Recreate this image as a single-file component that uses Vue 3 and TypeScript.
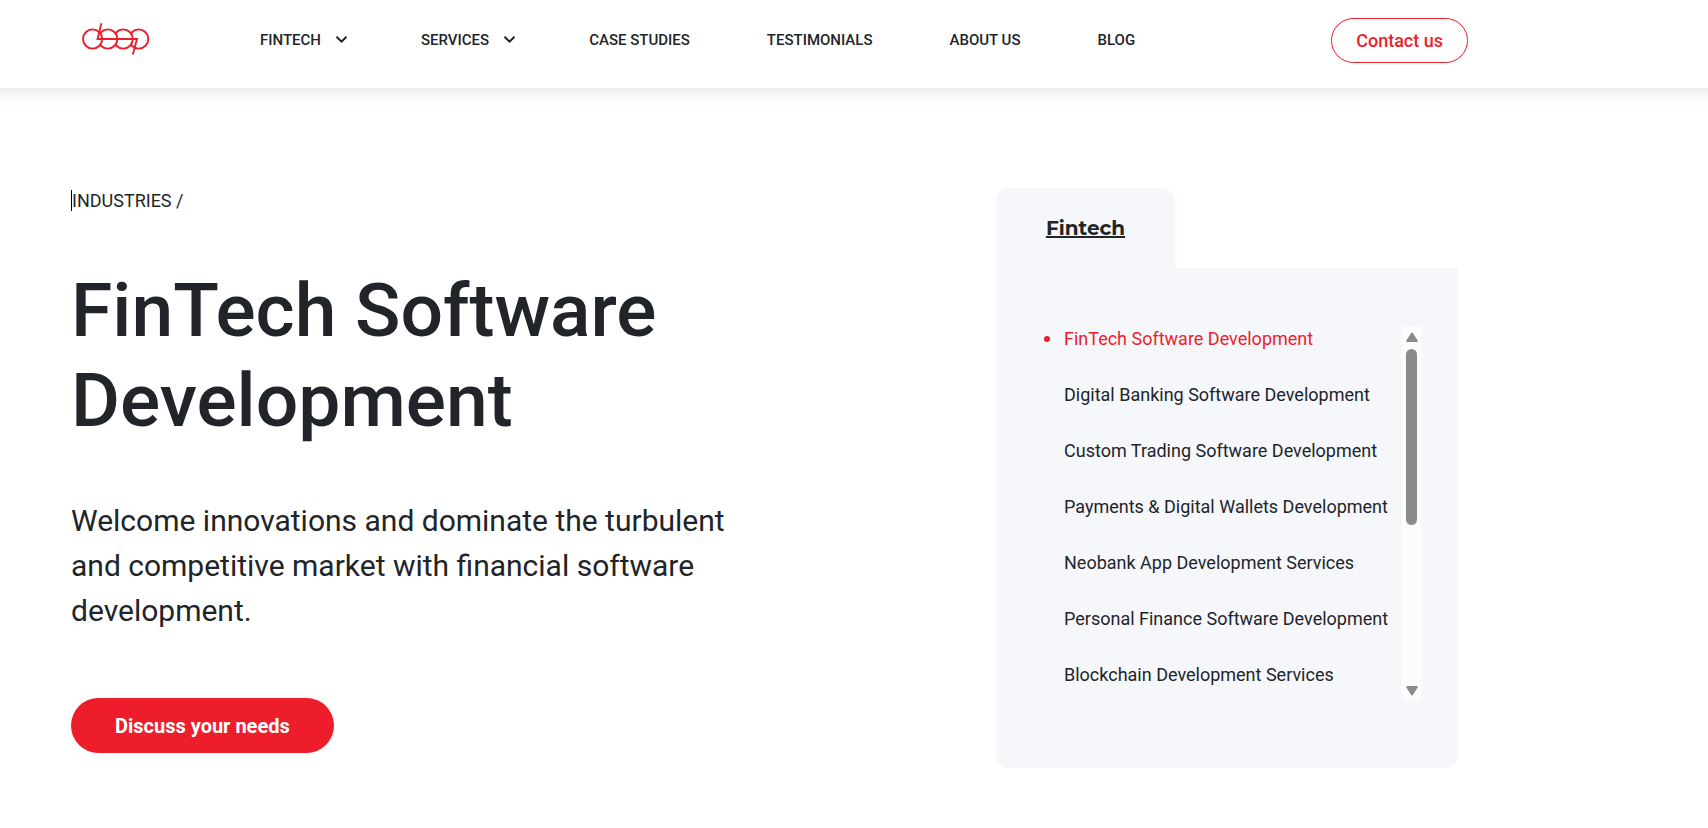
<script setup lang="ts">
interface NavItem {
  label: string
  menu: boolean
}

const navItems: NavItem[] = [
  { label: 'FINTECH', menu: true },
  { label: 'SERVICES', menu: true },
  { label: 'CASE STUDIES', menu: false },
  { label: 'TESTIMONIALS', menu: false },
  { label: 'ABOUT US', menu: false },
  { label: 'BLOG', menu: false },
]

const services: string[] = [
  'FinTech Software Development',
  'Digital Banking Software Development',
  'Custom Trading Software Development',
  'Payments & Digital Wallets Development',
  'Neobank App Development Services',
  'Personal Finance Software Development',
  'Blockchain Development Services',
]
</script>

<template>
  <div class="page">
    <header class="header">
      <div class="header-inner">
        <a class="logo" href="#" aria-label="Home">
          <svg width="68" height="34" viewBox="0 0 68 34" fill="none" stroke="#ee1d2c" stroke-width="1.9">
            <circle cx="56.7" cy="17" r="9.6" fill="#fff" />
            <circle cx="41.2" cy="17" r="9.6" fill="#fff" />
            <circle cx="25.8" cy="17" r="9.6" fill="#fff" />
            <circle cx="10.6" cy="17" r="9.6" fill="#fff" />
            <path d="M19.4 1.3 15.6 17H55L50.8 32.4" />
          </svg>
        </a>
        <nav class="nav">
          <a v-for="item in navItems" :key="item.label" class="nav-link" href="#">
            {{ item.label }}
            <svg v-if="item.menu" width="13" height="9" viewBox="0 0 13 9" fill="none" stroke="#212529" stroke-width="2">
              <path d="M1.5 1.7 6.5 6.7 11.5 1.7" />
            </svg>
          </a>
        </nav>
        <button class="contact" type="button">Contact us</button>
      </div>
    </header>

    <main class="hero">
      <section class="intro">
        <p class="crumb">INDUSTRIES /</p>
        <h1>FinTech Software Development</h1>
        <p class="lead">
          Welcome innovations and dominate the turbulent and competitive market with financial software development.
        </p>
        <button class="cta" type="button">Discuss your needs</button>
      </section>

      <aside class="panel">
        <div class="tab"><a href="#">Fintech</a></div>
        <div class="panel-body">
          <div class="scroller">
            <ul class="list">
              <li v-for="(service, index) in services" :key="service" :class="{ active: index === 0 }">
                <a href="#">{{ service }}</a>
              </li>
            </ul>
            <div class="rail" aria-hidden="true">
              <svg width="12" height="10" viewBox="0 0 12 10">
                <path d="M6 1.5 10.8 9H1.2Z" fill="#8b8b8b" stroke="#8b8b8b" stroke-width="2" stroke-linejoin="round" />
              </svg>
              <div class="thumb"></div>
              <svg width="12" height="10" viewBox="0 0 12 10">
                <path d="M6 8.5 10.8 1H1.2Z" fill="#8b8b8b" stroke="#8b8b8b" stroke-width="2" stroke-linejoin="round" />
              </svg>
            </div>
          </div>
        </div>
      </aside>
    </main>
  </div>
</template>

<style>
body {
  margin: 0;
  background: #fff;
}
</style>

<style scoped>
.page {
  font-family: Roboto, "Liberation Sans", sans-serif;
  color: #212529;
  overflow-x: hidden;
}
a {
  color: inherit;
  text-decoration: none;
}
button {
  font-family: inherit;
  cursor: pointer;
}
.header {
  box-shadow: 0 -16px 20px 16px rgba(0, 0, 0, 0.15);
}
.header-inner {
  box-sizing: border-box;
  display: flex;
  align-items: center;
  max-width: 1468px;
  padding: 18px 0 25px 82px;
}
.logo {
  display: flex;
  margin-right: 110px;
  padding-bottom: 4px;
}
.nav {
  display: flex;
  gap: 77px;
  padding-bottom: 2px;
}
.nav-link {
  display: flex;
  align-items: center;
  gap: 14px;
  font-size: 15px;
  line-height: 20px;
  font-weight: 500;
  white-space: nowrap;
}
.nav-link svg {
  margin-right: -4px;
}
.contact {
  margin-left: auto;
  padding: 0 24px;
  height: 45px;
  border: 1px solid #ee1d2c;
  border-radius: 23px;
  background: #fff;
  color: #ee1d2c;
  font-size: 18px;
  font-weight: 500;
  white-space: nowrap;
}
.hero {
  display: flex;
  justify-content: space-between;
  align-items: flex-start;
  max-width: 1387px;
  padding: 100px 0 60px 71px;
}
.intro {
  max-width: 694px;
}
.crumb {
  width: max-content;
  margin: 2px 0 54px;
  border-left: 1px solid #000;
  font-size: 18px;
  line-height: 21px;
}
h1 {
  margin: 0 0 53px;
  font-size: 75px;
  line-height: 90px;
  font-weight: 500;
}
.lead {
  margin: 0 0 65px;
  font-size: 30px;
  line-height: 45px;
}
.cta {
  height: 55px;
  padding: 0 44px;
  border: 0;
  border-radius: 28px;
  background: #ee1d2c;
  color: #fff;
  font-size: 20px;
  font-weight: 700;
}
.panel {
  flex: none;
  width: 462px;
}
.tab {
  display: flex;
  align-items: center;
  justify-content: center;
  width: 179px;
  height: 80px;
  border-radius: 13px 13px 0 0;
  background: #f6f7fb;
}
.tab a {
  font-family: Montserrat, Inter, sans-serif;
  font-size: 20px;
  line-height: 30px;
  font-weight: 700;
  text-decoration: underline;
  text-decoration-thickness: 2px;
}
.panel-body {
  padding: 58px 37px 67px 48px;
  border-radius: 0 0 13px 13px;
  background: #f6f7fb;
}
.scroller {
  display: flex;
  justify-content: space-between;
  height: 375px;
}
.list {
  display: flex;
  flex-direction: column;
  gap: 31px;
  margin: 0;
  padding: 0;
  list-style: none;
  overflow: hidden;
}
.list li {
  display: flex;
  align-items: center;
  gap: 14px;
  font-size: 18px;
  line-height: 25px;
  white-space: nowrap;
}
.list li::before {
  content: "";
  width: 6px;
  height: 6px;
  border-radius: 50%;
}
.list .active {
  color: #ee1d2c;
}
.list .active::before {
  background: #ee1d2c;
}
.rail {
  box-sizing: border-box;
  display: flex;
  flex-direction: column;
  align-items: center;
  gap: 7px;
  width: 19px;
  padding: 6px 0 5px;
  background: #fcfcfc;
}
.rail svg:last-child {
  margin-top: auto;
}
.thumb {
  width: 11px;
  height: 176px;
  border-radius: 6px;
  background: #8b8b8b;
}
</style>
